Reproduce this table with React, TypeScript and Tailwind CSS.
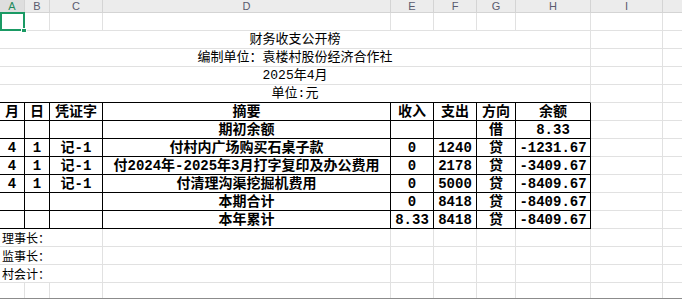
import type { ReactNode } from 'react';

// ==================== SHEET DATA ====================

// widths of columns A..J in px (border included)
const colW = ['w-[25px]', 'w-[25px]', 'w-[53px]', 'w-[288px]', 'w-[43px]', 'w-[43px]', 'w-[39px]', 'w-[75px]', 'w-[72px]', 'w-[40px]'];
// J is only partly on screen, its letter is out of view
const letters = ['A', 'B', 'C', 'D', 'E', 'F', 'G', 'H', 'I', ''];

const tableRows: string[][] = [
    ['月', '日', '凭证字', '摘要', '收入', '支出', '方向', '余额'],
    ['', '', '', '期初余额', '', '', '借', '8.33'],
    ['4', '1', '记-1', '付村内广场购买石桌子款', '0', '1240', '贷', '-1231.67'],
    ['4', '1', '记-1', '付2024年-2025年3月打字复印及办公费用', '0', '2178', '贷', '-3409.67'],
    ['4', '1', '记-1', '付清理沟渠挖掘机费用', '0', '5000', '贷', '-8409.67'],
    ['', '', '', '本期合计', '0', '8418', '贷', '-8409.67'],
    ['', '', '', '本年累计', '8.33', '8418', '贷', '-8409.67'],
];

const titles = ['财务收支公开榜', '编制单位：袁楼村股份经济合作社', '2025年4月', '单位:元'];
const signers = ['理事长：', '监事长：', '村会计：'];

const font = "font-['Liberation_Mono','Noto_Sans_CJK_SC',monospace]";

// ==================== CELLS ====================

function Cell({ w, children, cls = '' }: { w: string; children?: ReactNode; cls?: string }) {
    return (
        <div className={`${w} h-[18px] shrink-0 flex items-center pt-px overflow-visible whitespace-nowrap border-r border-b border-[#e1e1e1] ${cls}`}>
            {children}
        </div>
    );
}

function PlainRow() {
    return (
        <div className="flex">
            {colW.map((w, i) => <Cell key={i} w={w} />)}
        </div>
    );
}

// ==================== MAIN APP ====================

export default function App() {
    return (
        <div className={`relative w-[682px] h-[299px] overflow-hidden bg-white text-black ${font}`}>
            {/* column headers */}
            <div className="flex h-[13px] bg-[#ececec] border-b border-[#d4d4d4]">
                {colW.map((w, i) => (
                    <div
                        key={i}
                        className={`${w} shrink-0 h-[12px] flex items-center justify-center border-r border-[#d4d4d4] font-['Liberation_Sans',sans-serif] text-[11px] leading-[12px] ${i === 0 ? 'bg-[#dedede] text-[#1f8a5b]' : 'text-[#5a5a6e]'}`}
                    >
                        {letters[i]}
                    </div>
                ))}
            </div>

            {/* row 1 */}
            <PlainRow />

            {/* title rows, merged A..H */}
            {titles.map((t, r) => (
                <div key={t} className="flex">
                    <Cell w="w-[591px]" cls={`justify-center text-[13px] ${r === 3 ? 'border-b-black' : ''}`}>{t}</Cell>
                    <Cell w={colW[8]} />
                    <Cell w={colW[9]} />
                </div>
            ))}

            {/* account table */}
            {tableRows.map((row, r) => (
                <div key={r} className="flex">
                    {row.map((v, c) => (
                        <Cell key={c} w={colW[c]} cls="justify-center border-black text-[14px] font-bold">
                            {v}
                        </Cell>
                    ))}
                    <Cell w={colW[8]} />
                    <Cell w={colW[9]} />
                </div>
            ))}

            {/* signers, merged A..C */}
            {signers.map((s) => (
                <div key={s} className="flex">
                    <Cell w="w-[103px]" cls="pl-[2px] text-[12px] font-['Noto_Sans_CJK_SC',sans-serif]">{s}</Cell>
                    {colW.slice(3).map((w, i) => <Cell key={i} w={w} />)}
                </div>
            ))}

            <PlainRow />

            {/* bottom edge of the sheet */}
            <div className="absolute left-0 right-0 top-[298px] h-px bg-[#8c8c8c]" />

            {/* active cell A1 */}
            <div className="absolute left-0 top-[12px] w-[25px] h-[19px] border-2 border-[#1a9a64]" />
            <div className="absolute left-[21px] top-[28px] w-[6px] h-[5px] bg-[#1a9a64] border border-white" />
        </div>
    );
}
